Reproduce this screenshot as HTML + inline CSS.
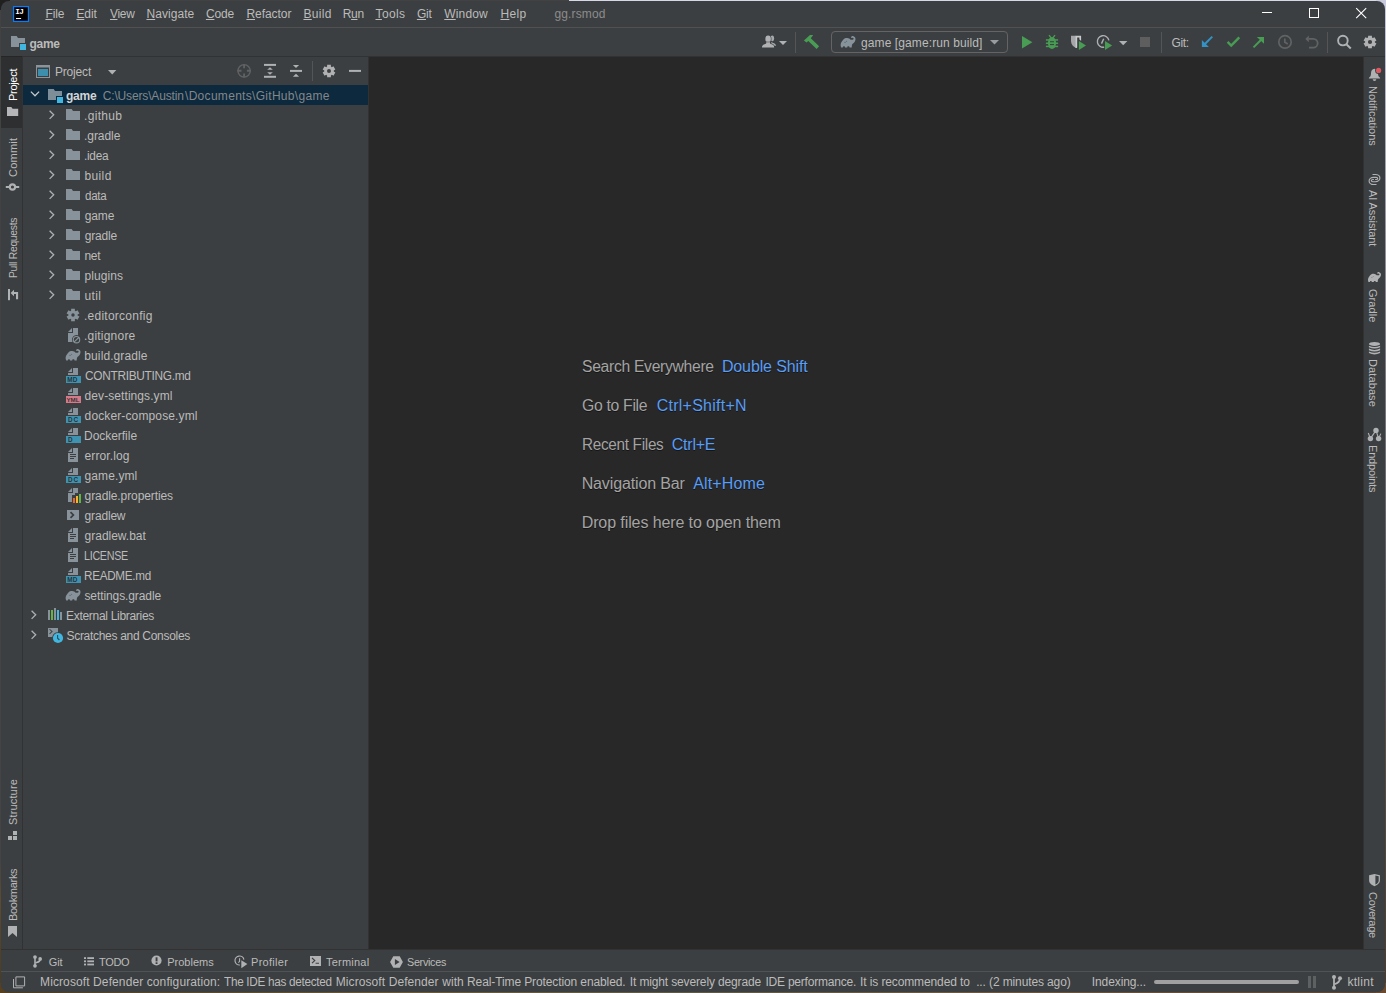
<!DOCTYPE html>
<html lang="en"><head><meta charset="utf-8"><title>game – gg.rsmod</title>
<style>
html,body{margin:0;padding:0}
body{width:1386px;height:993px;overflow:hidden;position:relative;
  background:linear-gradient(to bottom,#424242 0,#444444 860px,#5e4a2c 900px,#4c3a20 993px);
  font-family:"Liberation Sans",sans-serif;font-size:12px;color:#bbbbbb}
#topedge{position:absolute;left:569px;top:0;width:817px;height:1px;background:#d6d8e6}
#rightedge{position:absolute;left:1385px;top:0;width:1px;height:993px;background:linear-gradient(to bottom,#c8cadc 0,#8a8790 30%,#5d5a5e 60%,#4d3b2a 100%)}
#botedge{position:absolute;left:0;top:992px;width:1386px;height:1px;background:linear-gradient(to right,#4a3a20 0,#6a5a3a 30%,#5e5a48 50%,#6c5840 70%,#5a4433 100%)}
#win{position:absolute;left:1px;top:1px;width:1384px;height:991px;background:#3c3f41;border-radius:8px;overflow:hidden}
#win *{box-sizing:border-box}
.abs,.t,.i,.vt{position:absolute}
.t{white-space:nowrap;display:block;transform-origin:0 0}
.i{display:block;overflow:visible}
.hl{position:absolute;height:1px}
.vl{position:absolute;width:1px}
u{text-decoration:underline;text-underline-offset:1px;text-decoration-thickness:1px}
.b{font-weight:bold}
.dim{color:#8c8c8c}
.w{color:#ffffff}
/* vertical labels */
.vt{white-space:nowrap;display:block;height:14px;line-height:14px;font-size:11px;transform-origin:0 0}
.up{transform:rotate(-90deg)}
.dn{transform:rotate(90deg)}
/* editor hints */
.hint{font-size:16px;color:#a4a4a4;text-shadow:0 1px 0 #151515}
.hint .k{color:#589df6}
.s11{font-size:11px}
.cnr{position:absolute;width:10px;height:10px}

</style></head>
<body>
<div id="topedge"></div><div id="rightedge"></div><div id="botedge"></div><div class="cnr" style="left:1376px;top:0;background:#c9cbdd"></div><div class="cnr" style="left:1376px;top:983px;background:#6a4a30"></div><div class="cnr" style="left:0;top:983px;background:#574020"></div><div class="cnr" style="left:0;top:0;background:#202020"></div>
<div id="win">
<div id="o" class="abs" style="left:-1px;top:-1px;width:1386px;height:993px">
<div class="hl" style="left:0;top:27px;width:1386px;background:#515151"></div>
<svg class="i" style="left:13px;top:6px" width="16" height="16" viewBox="0 0 16 16"><rect width="16" height="16" fill="#087cfa"/><rect x="1.2" y="1.2" width="13.6" height="13.6" fill="#000"/><rect x="3" y="12" width="5.100" height="1" fill="#fff"/><text x="2.300" y="8.100" font-family="Liberation Mono, monospace" font-weight="bold" font-size="7.600" letter-spacing="-0.700" fill="#fff">IJ</text></svg>
<span id="m_File" class="t " style="left:45.44px;top:4px;height:20px;line-height:20px;letter-spacing:-0.14px;"><u>F</u>ile</span><span id="m_Edit" class="t " style="left:76.44px;top:4px;height:20px;line-height:20px;letter-spacing:-0.12px;"><u>E</u>dit</span><span id="m_View" class="t " style="left:110.00px;top:4px;height:20px;line-height:20px;letter-spacing:-0.3px;transform:scaleX(0.9933);"><u>V</u>iew</span><span id="m_Navigate" class="t " style="left:146.44px;top:4px;height:20px;line-height:20px;letter-spacing:0.069px;"><u>N</u>avigate</span><span id="m_Code" class="t " style="left:205.92px;top:4px;height:20px;line-height:20px;letter-spacing:-0.16px;"><u>C</u>ode</span><span id="m_Refactor" class="t " style="left:246.44px;top:4px;height:20px;line-height:20px;letter-spacing:-0.06px;"><u>R</u>efactor</span><span id="m_Build" class="t " style="left:303.44px;top:4px;height:20px;line-height:20px;letter-spacing:0.31px;"><u>B</u>uild</span><span id="m_Run" class="t " style="left:342.74px;top:4px;height:20px;line-height:20px;letter-spacing:-0.3px;">R<u>u</u>n</span><span id="m_Tools" class="t " style="left:375.50px;top:4px;height:20px;line-height:20px;letter-spacing:0.375px;"><u>T</u>ools</span><span id="m_Git" class="t " style="left:416.88px;top:4px;height:20px;line-height:20px;letter-spacing:-0.24px;"><u>G</u>it</span><span id="m_Window" class="t " style="left:444.28px;top:4px;height:20px;line-height:20px;letter-spacing:0.144px;"><u>W</u>indow</span><span id="m_Help" class="t " style="left:500.44px;top:4px;height:20px;line-height:20px;letter-spacing:0.32px;"><u>H</u>elp</span><span id="wtitle" class="t dim" style="left:554.50px;top:4px;height:20px;line-height:20px;letter-spacing:0.129px;">gg.rsmod</span>
<svg class="i" style="left:1250px;top:0" width="136" height="27" viewBox="0 0 136 27" shape-rendering="crispEdges"><rect x="12" y="12" width="10" height="1" fill="#fff"/><rect x="59.5" y="8.5" width="9" height="9" rx="1" fill="none" stroke="#fff" stroke-width="1"/></svg><svg class="i" style="left:1350px;top:0" width="30" height="27" viewBox="0 0 30 27"><path d="M6.2,8.2L16.2,18.2M16.2,8.2L6.2,18.2" stroke="#fff" stroke-width="1.1"/></svg>
<div class="hl" style="left:0;top:56px;width:1386px;background:#323232"></div>
<svg class="i" style="left:10px;top:34px" width="16" height="16" viewBox="0 0 16 16"><path fill="#9AA7B0" fill-opacity=".8" d="M1,13H9V9H15V4H7.985L6.696,2H1Z"/><rect x="10" y="10" width="6" height="6" fill="#40B6E0"/></svg><span id="nav_game" class="t b" style="left:29.50px;top:34px;height:20px;line-height:20px;letter-spacing:-0.3px;">game</span><svg class="i" style="left:761px;top:34px" width="16" height="16" viewBox="0 0 16 16"><g fill="#AFB1B3"><g fill-opacity=".92"><ellipse cx="11.300" cy="4.300" rx="1.800" ry="2.900"/><path d="M10.400,8C12,9 14.600,9.400 15.200,11.800L13.400,11.800C12.800,10.400 11.400,10 10,9.400Z"/></g><g stroke="#3c3f41" stroke-width="1.300" paint-order="stroke"><ellipse cx="7.100" cy="4.900" rx="2.750" ry="3.350"/><path d="M1,13.400C1,11 3,10.500 5.200,9.600L5.200,8.300L9,8.300L9,9.600C11.200,10.500 13.200,11 13.200,13.400Z"/></g></g></svg><svg class="i" style="left:779px;top:41px" width="8" height="4" viewBox="0 0 8 4"><path d="M0,0H8L4,4Z" fill="#AFB1B3"/></svg><div class="vl" style="left:795px;top:32px;height:21px;background:#555555"></div>
<svg class="i" style="left:803px;top:34px" width="17" height="16" viewBox="0 0 17 16"><path fill="#499C54" d="M.9,6.500L7,1.050L10.200,1.050L7.800,4.300L16.100,12.200L13.600,15.100L5.300,6.900L3.500,8.400Z"/></svg><div class="abs" style="left:831px;top:31px;width:177px;height:22px;border:1px solid #646464;border-radius:4px"></div>
<svg class="i" style="left:840px;top:34px" width="16" height="16" viewBox="0 0 16 16"><path fill="#9AA7B0" fill-opacity=".8" d="M1.2,13.6C0.5,12 0.4,10 1.2,8.6C1.8,7.4 2.6,6.6 3.4,5.6C4.4,4.4 6,4 7.2,4.1C8.6,4.2 9.8,4.8 10.6,5.8L12.6,5.8C13.4,5.8 13.8,5.2 13.6,4.6C13.4,3.9 12.6,3.6 12,3.9C11.5,4.1 11,3.8 11.1,3.3C11.3,2.4 12.4,1.9 13.4,2.2C14.8,2.6 15.6,3.8 15.5,5.2C15.4,7 14.4,8.4 13,9.6C12.2,10.3 11.8,11 11.8,12L11.7,13.6L9.6,13.6C9.6,12.6 9,12.2 8.3,12.2C7.6,12.2 7.2,12.8 7.2,13.4L5,13.4C5,12.7 4.6,12.2 3.9,12.2C3.2,12.2 2.8,12.8 2.8,13.6Z"/><path d="M4.2,8.3C4.8,8.7 5.6,8.6 6,8.1" fill="none" stroke="#3c3f41" stroke-opacity=".55" stroke-width=".7"/><circle cx="6.6" cy="7.3" r=".55" fill="#3c3f41" fill-opacity=".6"/></svg><span id="runcfg" class="t " style="left:861.00px;top:33px;height:20px;line-height:20px;letter-spacing:0.1px;">game [game:run build]</span><svg class="i" style="left:990px;top:40.3px" width="9" height="5" viewBox="0 0 9 5"><path d="M0,0H9L4.5,4.600Z" fill="#9a9da0"/></svg><svg class="i" style="left:1021.6px;top:35.8px" width="11" height="13" viewBox="0 0 11 13"><path d="M0,0L10.400,6.200L0,12.400Z" fill="#499C54"/></svg><svg class="i" style="left:1044px;top:34px" width="16" height="16" viewBox="0 0 16 16"><g fill="#499C54"><ellipse cx="8" cy="9" rx="4.100" ry="5.900"/><rect x="1.900" y="5.200" width="12.200" height="1.500"/><rect x="1.900" y="8.500" width="12.200" height="1.500"/><rect x="1.900" y="11.700" width="12.200" height="1.500"/></g><path d="M5,1.200L7.200,4M11,1.200L8.800,4" stroke="#499C54" stroke-width="1.300" fill="none"/><rect x="6" y="7.250" width="4" height="1" fill="#3c3f41"/><rect x="6" y="10.100" width="4" height="1" fill="#3c3f41"/></svg><svg class="i" style="left:1070px;top:34px" width="17" height="17" viewBox="0 0 17 17"><path d="M1,1.800H6V14.100C3,12.600 1,10.400 1,7Z" fill="#A4A6A8"/><path d="M5.600,1.800H11.100V7H9.400V3.600H7.200V13.400C6.900,13.700 6.400,13.900 6,14.100C5.800,14 5.700,13.950 5.600,13.900Z" fill="#C8CACC"/><path d="M8.900,5.300L17.600,11.500L8.900,17.600Z" fill="#3c3f41"/><path d="M0,0L7.100,4.500L0,9Z" transform="translate(8.900 7)" fill="#499C54"/></svg><svg class="i" style="left:1096px;top:34px" width="17" height="17" viewBox="0 0 17 17"><path d="M12.900,6.400A5.800,5.800 0 1 0 8.200,13.200" fill="none" stroke="#AFB1B3" stroke-width="1.350"/><path d="M7.700,4.800L5.500,9.600" fill="none" stroke="#AFB1B3" stroke-width="1.400"/><path d="M9,5.300L17.600,11.500L9,17.600Z" fill="#3c3f41"/><path d="M0,0L7.100,4.500L0,9Z" transform="translate(9 7)" fill="#499C54"/></svg><svg class="i" style="left:1118.7px;top:41px" width="9" height="5" viewBox="0 0 9 5"><path d="M0,0H8.400L4.200,4.300Z" fill="#AFB1B3"/></svg><div class="abs" style="left:1140px;top:37px;width:10px;height:10px;background:#5e5e5e"></div>
<div class="vl" style="left:1161px;top:32px;height:21px;background:#555555"></div>
<span id="gitlbl" class="t " style="left:1171.38px;top:33px;height:20px;line-height:20px;letter-spacing:-0.293px;">Git:</span><svg class="i" style="left:1196px;top:30px" width="76" height="24" viewBox="1196 30 76 24"><path d="M1201.900,40.100V47H1208.900Z" fill="#3592C4"/><path d="M1204.600,44.300L1212.300,36.600" stroke="#3592C4" stroke-width="2" fill="none"/><path d="M1227.600,41.900L1231.200,45.500L1239.300,37.400" stroke="#499C54" stroke-width="2.400" fill="none"/><path d="M1256.900,37.100H1264V43.700Z" fill="#499C54"/><path d="M1253.500,47.400L1261.200,39.800" stroke="#499C54" stroke-width="2" fill="none"/></svg><svg class="i" style="left:1270px;top:30px" width="56" height="24" viewBox="1270 30 56 24"><circle cx="1285" cy="41.900" r="6.200" fill="none" stroke="#606263" stroke-width="1.700"/><path d="M1284.800,38.500V42.300L1287.800,44.100" fill="none" stroke="#606263" stroke-width="1.700"/><path d="M1305.300,38.900L1308.800,35.500V42.300Z" fill="#606263"/><path d="M1308.600,38.800H1313.200A4.450,4.450 0 0 1 1313.200,47.700H1309" fill="none" stroke="#606263" stroke-width="1.800"/></svg><div class="vl" style="left:1327px;top:32px;height:21px;background:#555555"></div>
<svg class="i" style="left:1332px;top:30px" width="52" height="24" viewBox="1332 30 52 24"><circle cx="1342.900" cy="40.600" r="4.800" fill="none" stroke="#AFB1B3" stroke-width="1.900"/><path d="M1346.400,44.300L1350.800,48.500" stroke="#AFB1B3" stroke-width="2" fill="none"/></svg><svg class="i" style="left:1362px;top:34px" width="16" height="16" viewBox="0 0 16 16"><path fill="#AFB1B3" fill-rule="evenodd" stroke-linejoin="round" d="M6.05,3.51L6.11,1.68L9.89,1.68L9.95,3.51L10.92,4.06L12.53,3.20L14.42,6.47L12.87,7.44L12.87,8.56L14.42,9.53L12.53,12.80L10.92,11.94L9.95,12.49L9.89,14.32L6.11,14.32L6.05,12.49L5.08,11.94L3.47,12.80L1.58,9.53L3.13,8.56L3.13,7.44L1.58,6.47L3.47,3.20L5.08,4.06ZM10.10,8A2.1,2.1 0 1 0 5.90,8A2.1,2.1 0 1 0 10.10,8Z"/></svg>
<div class="vl" style="left:22px;top:57px;height:892px;background:#323232"></div>
<div class="abs" style="left:1px;top:57px;width:21px;height:71px;background:#2d2f30"></div><div class="hl" style="left:1px;top:56px;width:21px;background:#262626"></div>
<span id="v_project" class="vt up w" style="left:6.4px;top:100.74px;letter-spacing:-0.3px;transform:rotate(-90deg)">Project</span><span id="v_commit" class="vt up " style="left:6.4px;top:176.58px;letter-spacing:0.224px;transform:rotate(-90deg)">Commit</span><span id="v_pull" class="vt up " style="left:6.4px;top:277.90px;letter-spacing:-0.3px;transform:rotate(-90deg) scaleX(0.941)">Pull Requests</span><span id="v_structure" class="vt up " style="left:6.4px;top:824.74px;letter-spacing:0.147px;transform:rotate(-90deg)">Structure</span><span id="v_bookmarks" class="vt up " style="left:6.4px;top:920.94px;letter-spacing:-0.3px;transform:rotate(-90deg)">Bookmarks</span><svg class="i" style="left:0;top:100px" width="23" height="850" viewBox="0 100 23 850"><g fill="#AFB1B3"><path d="M7,107H11.300L12.600,108.800H18.200V116H7Z" fill="#B4B6B8"/><rect x="5.800" y="186" width="3.300" height="2"/><rect x="15.900" y="186" width="3.300" height="2"/><circle cx="12.450" cy="187" r="2.650" fill="none" stroke="#AFB1B3" stroke-width="2.100"/><rect x="8" y="289" width="2" height="11.200"/><path d="M10.600,293L14,289.700V292.100H18.100V299.200H16V294.100H14V296.300Z"/><rect x="13" y="831" width="4" height="4"/><rect x="8" y="836" width="4" height="4"/><rect x="13" y="836" width="4" height="4"/><path d="M8,926H17V937L12.500,933L8,937Z"/></g></svg>
<div class="abs" style="left:23px;top:85px;width:345px;height:20px;background:#0d293e"></div>
<div class="vl" style="left:368px;top:57px;height:892px;background:#323232"></div>
<svg class="i" style="left:36px;top:65px" width="14" height="13" viewBox="0 0 14 13"><rect x=".5" y=".5" width="13" height="12" fill="none" stroke="#8a949b" stroke-width="1"/><rect x=".5" y=".5" width="13" height="2" fill="#8a949b"/><rect x="2" y="4" width="10" height="7" fill="#3D8FAE"/></svg><span id="ph_project" class="t " style="left:54.94px;top:62px;height:20px;line-height:20px;letter-spacing:-0.173px;">Project</span><svg class="i" style="left:107.8px;top:69.9px" width="9" height="5" viewBox="0 0 9 5"><path d="M0,0H8.400L4.200,4.400Z" fill="#AFB1B3"/></svg><svg class="i" style="left:230px;top:58px" width="136" height="26" viewBox="230 58 136 26"><circle cx="244.100" cy="70.800" r="6.200" fill="none" stroke="#5f6162" stroke-width="1.400"/><path d="M244.100,64V68.200M244.100,73.600V77.600M237.300,70.800H241.500M246.900,70.800H250.900" stroke="#5f6162" stroke-width="1.900" fill="none"/><g fill="#AFB1B3"><rect x="264" y="63.900" width="12" height="2"/><rect x="264" y="75.800" width="12" height="2"/><path d="M270,67.200L272.800,69.700H267.200Z"/><path d="M270,74.700L272.800,72.200H267.200Z"/><rect x="290" y="69.900" width="12" height="2"/><path d="M296,67.900L299.100,65H292.900Z"/><path d="M296,73.800L299.100,76.800H292.900Z"/><rect x="349" y="69.900" width="12" height="2"/></g></svg>
<div class="vl" style="left:312px;top:61px;height:20px;background:#555555"></div>
<svg class="i" style="left:321px;top:63px" width="16" height="16" viewBox="0 0 16 16"><path fill="#AFB1B3" fill-rule="evenodd" stroke-linejoin="round" d="M6.09,3.60L6.14,1.77L9.86,1.77L9.91,3.60L10.86,4.14L12.46,3.28L14.32,6.50L12.77,7.46L12.77,8.54L14.32,9.50L12.46,12.72L10.86,11.86L9.91,12.40L9.86,14.23L6.14,14.23L6.09,12.40L5.14,11.86L3.54,12.72L1.68,9.50L3.23,8.54L3.23,7.46L1.68,6.50L3.54,3.28L5.14,4.14ZM10.00,8A2,2 0 1 0 6.00,8A2,2 0 1 0 10.00,8Z"/></svg><svg class="i" style="left:26.5px;top:87px" width="16" height="16" viewBox="0 0 16 16"><path d="M3.9,4.6 L8,8.8 L12.1,4.6" fill="none" stroke="#c4c8cb" stroke-width="1.3"/></svg><svg class="i" style="left:47px;top:87px" width="16" height="16" viewBox="0 0 16 16"><path fill="#9AA7B0" fill-opacity=".8" d="M1,13H9V9H15V4H7.985L6.696,2H1Z"/><rect x="10" y="10" width="6" height="6" fill="#40B6E0"/></svg><span id="t_root" class="t b" style="left:66.00px;top:86px;height:20px;line-height:20px;letter-spacing:-0.233px;color:#d4d4d4;">game</span><span id="t_rootpath" class="t " style="left:102.72px;top:86px;height:20px;line-height:20px;letter-spacing:-0.151px;color:#848789;">C:\Users\Austin</span><span id="t_rootpath2" class="t " style="left:185.02px;top:86px;height:20px;line-height:20px;letter-spacing:0.299px;color:#848789;">\Documents\GitHub\game</span><svg class="i" style="left:44.3px;top:107px" width="16" height="16" viewBox="0 0 16 16"><path d="M5.6,3.7 L9.7,7.8 L5.6,11.9" fill="none" stroke="#adb0b2" stroke-width="1.3"/></svg><svg class="i" style="left:65px;top:107px" width="16" height="16" viewBox="0 0 16 16"><path fill="#9AA7B0" fill-opacity=".8" d="M1,13H15V4H7.985L6.696,2H1Z"/></svg><span id="t_d0" class="t " style="left:84.06px;top:106px;height:20px;line-height:20px;letter-spacing:0.303px;">.github</span>
<svg class="i" style="left:44.3px;top:127px" width="16" height="16" viewBox="0 0 16 16"><path d="M5.6,3.7 L9.7,7.8 L5.6,11.9" fill="none" stroke="#adb0b2" stroke-width="1.3"/></svg><svg class="i" style="left:65px;top:127px" width="16" height="16" viewBox="0 0 16 16"><path fill="#9AA7B0" fill-opacity=".8" d="M1,13H15V4H7.985L6.696,2H1Z"/></svg><span id="t_d1" class="t " style="left:84.06px;top:126px;height:20px;line-height:20px;letter-spacing:-0.07px;">.gradle</span>
<svg class="i" style="left:44.3px;top:147px" width="16" height="16" viewBox="0 0 16 16"><path d="M5.6,3.7 L9.7,7.8 L5.6,11.9" fill="none" stroke="#adb0b2" stroke-width="1.3"/></svg><svg class="i" style="left:65px;top:147px" width="16" height="16" viewBox="0 0 16 16"><path fill="#9AA7B0" fill-opacity=".8" d="M1,13H15V4H7.985L6.696,2H1Z"/></svg><span id="t_d2" class="t " style="left:84.06px;top:146px;height:20px;line-height:20px;letter-spacing:-0.3px;transform:scaleX(0.9877);">.idea</span>
<svg class="i" style="left:44.3px;top:167px" width="16" height="16" viewBox="0 0 16 16"><path d="M5.6,3.7 L9.7,7.8 L5.6,11.9" fill="none" stroke="#adb0b2" stroke-width="1.3"/></svg><svg class="i" style="left:65px;top:167px" width="16" height="16" viewBox="0 0 16 16"><path fill="#9AA7B0" fill-opacity=".8" d="M1,13H15V4H7.985L6.696,2H1Z"/></svg><span id="t_d3" class="t " style="left:84.42px;top:166px;height:20px;line-height:20px;letter-spacing:0.395px;">build</span>
<svg class="i" style="left:44.3px;top:187px" width="16" height="16" viewBox="0 0 16 16"><path d="M5.6,3.7 L9.7,7.8 L5.6,11.9" fill="none" stroke="#adb0b2" stroke-width="1.3"/></svg><svg class="i" style="left:65px;top:187px" width="16" height="16" viewBox="0 0 16 16"><path fill="#9AA7B0" fill-opacity=".8" d="M1,13H15V4H7.985L6.696,2H1Z"/></svg><span id="t_d4" class="t " style="left:84.70px;top:186px;height:20px;line-height:20px;letter-spacing:-0.3px;transform:scaleX(0.9641);">data</span>
<svg class="i" style="left:44.3px;top:207px" width="16" height="16" viewBox="0 0 16 16"><path d="M5.6,3.7 L9.7,7.8 L5.6,11.9" fill="none" stroke="#adb0b2" stroke-width="1.3"/></svg><svg class="i" style="left:65px;top:207px" width="16" height="16" viewBox="0 0 16 16"><path fill="#9AA7B0" fill-opacity=".8" d="M1,13H15V4H7.985L6.696,2H1Z"/></svg><span id="t_d5" class="t " style="left:84.70px;top:206px;height:20px;line-height:20px;letter-spacing:-0.127px;">game</span>
<svg class="i" style="left:44.3px;top:227px" width="16" height="16" viewBox="0 0 16 16"><path d="M5.6,3.7 L9.7,7.8 L5.6,11.9" fill="none" stroke="#adb0b2" stroke-width="1.3"/></svg><svg class="i" style="left:65px;top:227px" width="16" height="16" viewBox="0 0 16 16"><path fill="#9AA7B0" fill-opacity=".8" d="M1,13H15V4H7.985L6.696,2H1Z"/></svg><span id="t_d6" class="t " style="left:84.70px;top:226px;height:20px;line-height:20px;letter-spacing:-0.156px;">gradle</span>
<svg class="i" style="left:44.3px;top:247px" width="16" height="16" viewBox="0 0 16 16"><path d="M5.6,3.7 L9.7,7.8 L5.6,11.9" fill="none" stroke="#adb0b2" stroke-width="1.3"/></svg><svg class="i" style="left:65px;top:247px" width="16" height="16" viewBox="0 0 16 16"><path fill="#9AA7B0" fill-opacity=".8" d="M1,13H15V4H7.985L6.696,2H1Z"/></svg><span id="t_d7" class="t " style="left:84.38px;top:246px;height:20px;line-height:20px;letter-spacing:-0.2px;">net</span>
<svg class="i" style="left:44.3px;top:267px" width="16" height="16" viewBox="0 0 16 16"><path d="M5.6,3.7 L9.7,7.8 L5.6,11.9" fill="none" stroke="#adb0b2" stroke-width="1.3"/></svg><svg class="i" style="left:65px;top:267px" width="16" height="16" viewBox="0 0 16 16"><path fill="#9AA7B0" fill-opacity=".8" d="M1,13H15V4H7.985L6.696,2H1Z"/></svg><span id="t_d8" class="t " style="left:84.42px;top:266px;height:20px;line-height:20px;letter-spacing:0.097px;">plugins</span>
<svg class="i" style="left:44.3px;top:287px" width="16" height="16" viewBox="0 0 16 16"><path d="M5.6,3.7 L9.7,7.8 L5.6,11.9" fill="none" stroke="#adb0b2" stroke-width="1.3"/></svg><svg class="i" style="left:65px;top:287px" width="16" height="16" viewBox="0 0 16 16"><path fill="#9AA7B0" fill-opacity=".8" d="M1,13H15V4H7.985L6.696,2H1Z"/></svg><span id="t_d9" class="t " style="left:84.42px;top:286px;height:20px;line-height:20px;letter-spacing:0.393px;">util</span>
<svg class="i" style="left:65px;top:307px" width="16" height="16" viewBox="0 0 16 16"><path fill="#9AA7B0" fill-opacity=".8" fill-rule="evenodd" stroke-linejoin="round" d="M6.17,3.78L6.11,1.68L9.89,1.68L9.83,3.78L10.74,4.30L12.53,3.20L14.42,6.47L12.57,7.48L12.57,8.52L14.42,9.53L12.53,12.80L10.74,11.70L9.83,12.22L9.89,14.32L6.11,14.32L6.17,12.22L5.26,11.70L3.47,12.80L1.58,9.53L3.43,8.52L3.43,7.48L1.58,6.47L3.47,3.20L5.26,4.30ZM9.70,8A1.7,1.7 0 1 0 6.30,8A1.7,1.7 0 1 0 9.70,8Z"/></svg><span id="t_f0" class="t " style="left:83.96px;top:306px;height:20px;line-height:20px;letter-spacing:0.253px;">.editorconfig</span>
<svg class="i" style="left:65px;top:327px" width="16" height="16" viewBox="0 0 16 16"><path fill="#9AA7B0" fill-opacity=".8" d="M7,1L3,5H7Z"/><path fill="#9AA7B0" fill-opacity=".8" d="M8,1V6H3V15H7.4A4.7,4.7 0 0 1 13,8.3V1Z"/><circle cx="11.5" cy="12.7" r="3.2" fill="none" stroke="#9AA7B0" stroke-opacity=".8" stroke-width="1.1"/><path d="M9.3,14.9L13.7,10.5" stroke="#9AA7B0" stroke-opacity=".8" stroke-width="1.1"/></svg><span id="t_f1" class="t " style="left:83.96px;top:326px;height:20px;line-height:20px;letter-spacing:0.218px;">.gitignore</span>
<svg class="i" style="left:65px;top:347px" width="16" height="16" viewBox="0 0 16 16"><path fill="#9AA7B0" fill-opacity=".8" d="M1.2,13.6C0.5,12 0.4,10 1.2,8.6C1.8,7.4 2.6,6.6 3.4,5.6C4.4,4.4 6,4 7.2,4.1C8.6,4.2 9.8,4.8 10.6,5.8L12.6,5.8C13.4,5.8 13.8,5.2 13.6,4.6C13.4,3.9 12.6,3.6 12,3.9C11.5,4.1 11,3.8 11.1,3.3C11.3,2.4 12.4,1.9 13.4,2.2C14.8,2.6 15.6,3.8 15.5,5.2C15.4,7 14.4,8.4 13,9.6C12.2,10.3 11.8,11 11.8,12L11.7,13.6L9.6,13.6C9.6,12.6 9,12.2 8.3,12.2C7.6,12.2 7.2,12.8 7.2,13.4L5,13.4C5,12.7 4.6,12.2 3.9,12.2C3.2,12.2 2.8,12.8 2.8,13.6Z"/><path d="M4.2,8.3C4.8,8.7 5.6,8.6 6,8.1" fill="none" stroke="#3c3f41" stroke-opacity=".55" stroke-width=".7"/><circle cx="6.6" cy="7.3" r=".55" fill="#3c3f41" fill-opacity=".6"/></svg><span id="t_f2" class="t " style="left:84.32px;top:346px;height:20px;line-height:20px;letter-spacing:0.1px;">build.gradle</span>
<svg class="i" style="left:65px;top:367px" width="16" height="16" viewBox="0 0 16 16"><path fill="#9AA7B0" fill-opacity=".8" d="M7,1L3,5H7Z"/><path fill="#9AA7B0" fill-opacity=".8" d="M8,1V6H3V8H13V1Z"/><rect x="1" y="9" width="15" height="7" fill="#40B6E0" fill-opacity="0.7"/><text x="2.2" y="15" font-family="Liberation Sans, sans-serif" font-weight="bold" font-size="6.4" letter-spacing="0.3" fill="#231F20" fill-opacity=".85">MD</text></svg><span id="t_f3" class="t " style="left:84.52px;top:366px;height:20px;line-height:20px;letter-spacing:-0.3px;transform:scaleX(0.9876);">CONTRIBUTING.md</span>
<svg class="i" style="left:65px;top:387px" width="16" height="16" viewBox="0 0 16 16"><path fill="#9AA7B0" fill-opacity=".8" d="M7,1L3,5H7Z"/><path fill="#9AA7B0" fill-opacity=".8" d="M8,1V6H3V8H13V1Z"/><rect x="1" y="9" width="15" height="7" fill="#F98B9E" fill-opacity="0.8"/><text x="1.4" y="15" font-family="Liberation Sans, sans-serif" font-weight="bold" font-size="6.2" letter-spacing="0" fill="#231F20" fill-opacity=".85">YML</text></svg><span id="t_f4" class="t " style="left:84.60px;top:386px;height:20px;line-height:20px;letter-spacing:0.075px;">dev-settings.yml</span>
<svg class="i" style="left:65px;top:407px" width="16" height="16" viewBox="0 0 16 16"><path fill="#9AA7B0" fill-opacity=".8" d="M7,1L3,5H7Z"/><path fill="#9AA7B0" fill-opacity=".8" d="M8,1V6H3V8H13V1Z"/><rect x="1" y="9" width="15" height="7" fill="#40B6E0" fill-opacity="0.7"/><text x="3" y="15" font-family="Liberation Sans, sans-serif" font-weight="bold" font-size="6.4" letter-spacing="1.0" fill="#231F20" fill-opacity=".85">DC</text></svg><span id="t_f5" class="t " style="left:84.60px;top:406px;height:20px;line-height:20px;letter-spacing:0.125px;">docker-compose.yml</span>
<svg class="i" style="left:65px;top:427px" width="16" height="16" viewBox="0 0 16 16"><path fill="#9AA7B0" fill-opacity=".8" d="M7,1L3,5H7Z"/><path fill="#9AA7B0" fill-opacity=".8" d="M8,1V6H3V8H13V1Z"/><rect x="1" y="9" width="15" height="7" fill="#40B6E0" fill-opacity="0.7"/><text x="3" y="15" font-family="Liberation Sans, sans-serif" font-weight="bold" font-size="6.4" letter-spacing="0" fill="#231F20" fill-opacity=".85">D</text></svg><span id="t_f6" class="t " style="left:84.04px;top:426px;height:20px;line-height:20px;letter-spacing:-0.036px;">Dockerfile</span>
<svg class="i" style="left:65px;top:447px" width="16" height="16" viewBox="0 0 16 16"><path fill="#9AA7B0" fill-opacity=".8" d="M7,1L3,5H7Z"/><path fill="#9AA7B0" fill-opacity=".8" fill-rule="evenodd" d="M8,1V6H3V15H13V1ZM5,7H11V8H5ZM5,9H11V10H5ZM5,11H9V12H5Z"/></svg><span id="t_f7" class="t " style="left:84.60px;top:446px;height:20px;line-height:20px;letter-spacing:0.1px;">error.log</span>
<svg class="i" style="left:65px;top:467px" width="16" height="16" viewBox="0 0 16 16"><path fill="#9AA7B0" fill-opacity=".8" d="M7,1L3,5H7Z"/><path fill="#9AA7B0" fill-opacity=".8" d="M8,1V6H3V8H13V1Z"/><rect x="1" y="9" width="15" height="7" fill="#40B6E0" fill-opacity="0.7"/><text x="3" y="15" font-family="Liberation Sans, sans-serif" font-weight="bold" font-size="6.4" letter-spacing="1.0" fill="#231F20" fill-opacity=".85">DC</text></svg><span id="t_f8" class="t " style="left:84.60px;top:466px;height:20px;line-height:20px;letter-spacing:0.091px;">game.yml</span>
<svg class="i" style="left:65px;top:487px" width="16" height="16" viewBox="0 0 16 16"><path fill="#9AA7B0" fill-opacity=".8" d="M7,1L3,5H7Z"/><path fill="#9AA7B0" fill-opacity=".8" d="M8,1V6H3V15H7V8H10V6H13V1Z"/><rect x="8" y="11" width="2" height="5" fill="#F26522"/><rect x="11" y="9" width="2" height="7" fill="#F9B233"/><rect x="14" y="7" width="2" height="9" fill="#62B543"/></svg><span id="t_f9" class="t " style="left:84.60px;top:486px;height:20px;line-height:20px;letter-spacing:-0.1px;">gradle.properties</span>
<svg class="i" style="left:65px;top:507px" width="16" height="16" viewBox="0 0 16 16"><path fill="#9AA7B0" fill-opacity=".8" fill-rule="evenodd" d="M2,3H14V13H2ZM4.900,5.800L7.200,8L4.900,10.200L6.100,11.400L9.600,8L6.100,4.600Z"/></svg><span id="t_f10" class="t " style="left:84.60px;top:506px;height:20px;line-height:20px;letter-spacing:-0.18px;">gradlew</span>
<svg class="i" style="left:65px;top:527px" width="16" height="16" viewBox="0 0 16 16"><path fill="#9AA7B0" fill-opacity=".8" d="M7,1L3,5H7Z"/><path fill="#9AA7B0" fill-opacity=".8" fill-rule="evenodd" d="M8,1V6H3V15H13V1ZM5,7H11V8H5ZM5,9H11V10H5ZM5,11H9V12H5Z"/></svg><span id="t_f11" class="t " style="left:84.60px;top:526px;height:20px;line-height:20px;letter-spacing:-0.02px;">gradlew.bat</span>
<svg class="i" style="left:65px;top:547px" width="16" height="16" viewBox="0 0 16 16"><path fill="#9AA7B0" fill-opacity=".8" d="M7,1L3,5H7Z"/><path fill="#9AA7B0" fill-opacity=".8" fill-rule="evenodd" d="M8,1V6H3V15H13V1ZM5,7H11V8H5ZM5,9H11V10H5ZM5,11H9V12H5Z"/></svg><span id="t_f12" class="t " style="left:84.20px;top:546px;height:20px;line-height:20px;letter-spacing:-0.3px;transform:scaleX(0.8923);">LICENSE</span>
<svg class="i" style="left:65px;top:567px" width="16" height="16" viewBox="0 0 16 16"><path fill="#9AA7B0" fill-opacity=".8" d="M7,1L3,5H7Z"/><path fill="#9AA7B0" fill-opacity=".8" d="M8,1V6H3V8H13V1Z"/><rect x="1" y="9" width="15" height="7" fill="#40B6E0" fill-opacity="0.7"/><text x="2.2" y="15" font-family="Liberation Sans, sans-serif" font-weight="bold" font-size="6.4" letter-spacing="0.3" fill="#231F20" fill-opacity=".85">MD</text></svg><span id="t_f13" class="t " style="left:84.08px;top:566px;height:20px;line-height:20px;letter-spacing:-0.3px;transform:scaleX(0.9759);">README.md</span>
<svg class="i" style="left:65px;top:587px" width="16" height="16" viewBox="0 0 16 16"><path fill="#9AA7B0" fill-opacity=".8" d="M1.2,13.6C0.5,12 0.4,10 1.2,8.6C1.8,7.4 2.6,6.6 3.4,5.6C4.4,4.4 6,4 7.2,4.1C8.6,4.2 9.8,4.8 10.6,5.8L12.6,5.8C13.4,5.8 13.8,5.2 13.6,4.6C13.4,3.9 12.6,3.6 12,3.9C11.5,4.1 11,3.8 11.1,3.3C11.3,2.4 12.4,1.9 13.4,2.2C14.8,2.6 15.6,3.8 15.5,5.2C15.4,7 14.4,8.4 13,9.6C12.2,10.3 11.8,11 11.8,12L11.7,13.6L9.6,13.6C9.6,12.6 9,12.2 8.3,12.2C7.6,12.2 7.2,12.8 7.2,13.4L5,13.4C5,12.7 4.6,12.2 3.9,12.2C3.2,12.2 2.8,12.8 2.8,13.6Z"/><path d="M4.2,8.3C4.8,8.7 5.6,8.6 6,8.1" fill="none" stroke="#3c3f41" stroke-opacity=".55" stroke-width=".7"/><circle cx="6.6" cy="7.3" r=".55" fill="#3c3f41" fill-opacity=".6"/></svg><span id="t_f14" class="t " style="left:84.48px;top:586px;height:20px;line-height:20px;letter-spacing:-0.097px;">settings.gradle</span>
<svg class="i" style="left:26.4px;top:607px" width="16" height="16" viewBox="0 0 16 16"><path d="M5.6,3.7 L9.7,7.8 L5.6,11.9" fill="none" stroke="#adb0b2" stroke-width="1.3"/></svg><svg class="i" style="left:47px;top:607px" width="16" height="16" viewBox="0 0 16 16"><rect x="1" y="3" width="2" height="10" fill="#9AA7B0" fill-opacity=".8"/><rect x="4" y="3" width="2" height="10" fill="#62B543"/><rect x="7" y="1" width="2" height="12" fill="#9AA7B0" fill-opacity=".8"/><rect x="10" y="3" width="2" height="10" fill="#40B6E0"/><rect x="13" y="5" width="2" height="8" fill="#9AA7B0" fill-opacity=".8"/></svg><span id="t_ext" class="t " style="left:66.04px;top:606px;height:20px;line-height:20px;letter-spacing:-0.3px;">External Libraries</span><svg class="i" style="left:26.4px;top:627px" width="16" height="16" viewBox="0 0 16 16"><path d="M5.6,3.7 L9.7,7.8 L5.6,11.9" fill="none" stroke="#adb0b2" stroke-width="1.3"/></svg><svg class="i" style="left:47px;top:627px" width="16" height="16" viewBox="0 0 16 16"><path fill="#9AA7B0" fill-opacity=".8" fill-rule="evenodd" d="M1,1H11V5.2A6.2,6.2 0 0 0 5.2,10H1ZM2.2,2.6L4.4,4.6L2.2,6.6L2.9,7.3L5.8,4.6L2.9,1.9Z"/><circle cx="11" cy="11" r="5.1" fill="#40B6E0"/><path d="M10.6,8V11.2L12.4,13" fill="none" stroke="#231F20" stroke-opacity=".7" stroke-width="1.1"/></svg><span id="t_scr" class="t " style="left:66.50px;top:626px;height:20px;line-height:20px;letter-spacing:-0.3px;">Scratches and Consoles</span>
<div class="abs" style="left:369px;top:57px;width:994px;height:892px;background:#282828"></div>
<span id="h0a" class="t hint" style="left:582.12px;top:357px;height:20px;line-height:20px;letter-spacing:-0.3px;transform:scaleX(0.9793);">Search Everywhere</span><span id="h0b" class="t hint k" style="left:721.90px;top:357px;height:20px;line-height:20px;letter-spacing:-0.122px;color:#589df6;">Double Shift</span>
<span id="h1a" class="t hint" style="left:582.28px;top:396px;height:20px;line-height:20px;letter-spacing:-0.3px;transform:scaleX(0.9836);">Go to File</span><span id="h1b" class="t hint k" style="left:656.68px;top:396px;height:20px;line-height:20px;letter-spacing:0.256px;color:#589df6;">Ctrl+Shift+N</span>
<span id="h2a" class="t hint" style="left:581.70px;top:435px;height:20px;line-height:20px;letter-spacing:-0.3px;transform:scaleX(0.9544);">Recent Files</span><span id="h2b" class="t hint k" style="left:671.78px;top:435px;height:20px;line-height:20px;letter-spacing:-0.228px;color:#589df6;">Ctrl+E</span>
<span id="h3a" class="t hint" style="left:581.70px;top:474px;height:20px;line-height:20px;letter-spacing:-0.138px;">Navigation Bar</span><span id="h3b" class="t hint k" style="left:693.34px;top:474px;height:20px;line-height:20px;letter-spacing:0.114px;color:#589df6;">Alt+Home</span>
<span id="h4a" class="t hint" style="left:581.70px;top:513px;height:20px;line-height:20px;letter-spacing:-0.098px;">Drop files here to open them</span>
<div class="vl" style="left:1363px;top:57px;height:892px;background:#323232"></div>
<span id="r_notif" class="vt dn " style="left:1379.5px;top:85.76px;letter-spacing:-0.01px;transform:rotate(90deg)">Notifications</span><span id="r_ai" class="vt dn " style="left:1379.5px;top:190.24px;letter-spacing:-0.095px;transform:rotate(90deg)">AI Assistant</span><span id="r_gradle" class="vt dn " style="left:1379.5px;top:288.66px;letter-spacing:0.048px;transform:rotate(90deg)">Gradle</span><span id="r_db" class="vt dn " style="left:1379.5px;top:358.66px;letter-spacing:0.106px;transform:rotate(90deg)">Database</span><span id="r_endp" class="vt dn " style="left:1379.5px;top:445.46px;letter-spacing:-0.177px;transform:rotate(90deg)">Endpoints</span><span id="r_cov" class="vt dn " style="left:1379.5px;top:891.72px;letter-spacing:-0.211px;transform:rotate(90deg)">Coverage</span><svg class="i" style="left:1364px;top:60px" width="21" height="840" viewBox="1364 60 21 840"><g fill="#AFB1B3"><path d="M1374.500,68.800C1372,68.800 1371,71 1371,73.500C1371,75.800 1370.200,77 1368.900,77.700V78.500H1380.100V77.700C1378.800,77 1378,75.800 1378,73.500C1378,71 1377,68.800 1374.500,68.800Z"/><path d="M1372.700,79.300H1376.300A1.800,1.800 0 0 1 1372.700,79.300Z"/><circle cx="1378.600" cy="70.400" r="3.500" fill="#3c3f41"/><circle cx="1378.600" cy="70.400" r="2.600" fill="#DB5860"/><g transform="translate(1374.500 179.500)" fill="none" stroke="#AFB1B3" stroke-width="1.150"><path d="M.6,0H1.6A1.600,1.100 0 0 0 1.600,-2.200H-1A4.400,3.600 0 0 0 -1,5H2"/><path d="M.6,0H1.6A1.600,1.100 0 0 0 1.600,-2.200H-1A4.400,3.600 0 0 0 -1,5H2" transform="rotate(180)"/></g><path transform="translate(1367.450 270.200) scale(.875)" d="M1.2,13.6C0.5,12 0.4,10 1.2,8.6C1.8,7.4 2.6,6.6 3.4,5.6C4.4,4.4 6,4 7.2,4.1C8.6,4.2 9.8,4.8 10.6,5.8L12.6,5.8C13.4,5.8 13.8,5.2 13.6,4.6C13.4,3.9 12.6,3.6 12,3.9C11.5,4.1 11,3.8 11.1,3.3C11.3,2.4 12.4,1.9 13.4,2.2C14.8,2.6 15.6,3.8 15.5,5.2C15.4,7 14.4,8.4 13,9.6C12.2,10.3 11.8,11 11.8,12L11.7,13.6L9.6,13.6C9.6,12.6 9,12.2 8.3,12.2C7.6,12.2 7.2,12.8 7.2,13.4L5,13.4C5,12.7 4.6,12.2 3.9,12.2C3.2,12.2 2.8,12.8 2.8,13.6Z"/><path d="M1371.100,277.400C1371.600,277.800 1372.300,277.700 1372.700,277.200" fill="none" stroke="#3c3f41" stroke-opacity=".5" stroke-width=".6"/><circle cx="1373.300" cy="276.500" r=".45" fill="#3c3f41" fill-opacity=".5"/><ellipse cx="1374.500" cy="343.900" rx="5.600" ry="2"/><path d="M1368.900,345.7Q1374.500,348.3 1380.100,345.7V347.3Q1374.500,349.9 1368.900,347.3Z"/><path d="M1368.900,348.6Q1374.500,351.2 1380.100,348.6V350.2Q1374.500,352.8 1368.900,350.2Z"/><path d="M1368.900,351.5Q1374.500,354.1 1380.100,351.5V353.1Q1374.500,355.7 1368.900,353.1Z"/><circle cx="1376" cy="430.400" r="2.700"/><circle cx="1370.400" cy="438.600" r="2.700"/><circle cx="1378.600" cy="438.600" r="2.700"/><path d="M1376,430.400L1370.400,438.600M1376,430.400L1378.600,438.600M1370.400,438.600L1368.300,433M1378.600,438.600L1380.800,433.600" fill="none" stroke="#AFB1B3" stroke-width="1.100"/><path fill-rule="evenodd" d="M1374.500,874L1379.900,875.300V880.500C1379.900,883.500 1377,885.200 1374.500,886.200C1372,885.200 1369.100,883.500 1369.100,880.500V875.300ZM1375.400,875.500L1378.700,876.300V880.500C1378.700,882.500 1377,883.900 1375.400,884.600Z"/></g></svg>
<div class="hl" style="left:0;top:949px;width:1386px;background:#323232"></div>
<div class="abs" style="left:0;top:950px;width:1386px;height:43px;background:#3c3f41"></div>
<div class="hl" style="left:0;top:971px;width:1386px;background:#505355"></div>
<svg class="i" style="left:30.85px;top:953.20px" width="13.15" height="16.80" viewBox="-4 -4 13.15 16.80"><g fill="none" stroke="#AFB1B3" stroke-width="1.6"><path d="M0,0V8.8"/><path d="M5.15,1.9C5.15,4.80 3.60,4.84 .4,5.90"/></g><g fill="#AFB1B3"><circle cx="0" cy="0" r="1.85"/><circle cx="0" cy="8.8" r="1.85"/><circle cx="5.15" cy="1.9" r="1.85"/></g></svg><span id="b_git" class="t s11" style="left:48.66px;top:951.5px;height:20px;line-height:20px;letter-spacing:-0.04px;">Git</span><svg class="i" style="left:83.8px;top:956px" width="11" height="11" viewBox="0 0 11 11"><g fill="#AFB1B3"><rect x="0" y="1.200" width="2" height="1.800"/><rect x="3.300" y="1.200" width="6.700" height="1.800"/><rect x="0" y="4.400" width="2" height="1.800"/><rect x="3.300" y="4.400" width="6.700" height="1.800"/><rect x="0" y="7.600" width="2" height="1.800"/><rect x="3.300" y="7.600" width="6.700" height="1.800"/></g></svg><span id="b_todo" class="t s11" style="left:98.92px;top:951.5px;height:20px;line-height:20px;letter-spacing:-0.287px;">TODO</span><svg class="i" style="left:151.2px;top:955.3px" width="11" height="11" viewBox="0 0 11 11"><circle cx="5.500" cy="5.500" r="5.100" fill="#AFB1B3"/><rect x="4.600" y="2.300" width="1.900" height="4.100" fill="#3c3f41"/><rect x="4.600" y="7.300" width="1.900" height="1.700" fill="#3c3f41"/></svg><span id="b_prob" class="t s11" style="left:167.16px;top:951.5px;height:20px;line-height:20px;letter-spacing:0.009px;">Problems</span><svg class="i" style="left:233.7px;top:954.5px" width="14" height="14" viewBox="0 0 14 14"><path d="M5.900,10A4.500,4.500 0 1 1 9.900,4.600" fill="none" stroke="#AFB1B3" stroke-width="1.200"/><path d="M5.600,3.200V6.400L4.400,7.700" fill="none" stroke="#AFB1B3" stroke-width="1.100"/><path d="M7.300,5.200L13.400,8.900L7.300,13.200Z" fill="#AFB1B3"/></svg><span id="b_prof" class="t s11" style="left:251.06px;top:951.5px;height:20px;line-height:20px;letter-spacing:0.274px;">Profiler</span><svg class="i" style="left:310px;top:956px" width="11" height="10" viewBox="0 0 11 10"><path fill="#AFB1B3" fill-rule="evenodd" d="M0,0H11V10H0ZM1.600,2.400L4,4.600L1.600,6.800L2.400,7.600L5.600,4.600L2.400,1.600ZM5.600,6.800H9V7.800H5.600Z"/></svg><span id="b_term" class="t s11" style="left:325.92px;top:951.5px;height:20px;line-height:20px;letter-spacing:0.24px;">Terminal</span><svg class="i" style="left:390px;top:955.6px" width="13" height="12" viewBox="0 0 13 12"><path fill="#AFB1B3" fill-rule="evenodd" d="M3.300,.300H9.700L12.900,6L9.700,11.700H3.300L.100,6ZM4.900,2.900V9.100L9.600,6Z"/></svg><span id="b_serv" class="t s11" style="left:407.16px;top:951.5px;height:20px;line-height:20px;letter-spacing:-0.3px;transform:scaleX(0.9799);">Services</span>
<svg class="i" style="left:13px;top:975.5px" width="13" height="13" viewBox="0 0 13 13"><path d="M2.900,.900H11.600V9.900H2.900Z" fill="none" stroke="#AFB1B3" stroke-width="1"/><path d="M.500,3V11.800H9.900" fill="none" stroke="#AFB1B3" stroke-width="1"/></svg><span id="s_msg0" class="t " style="left:40.04px;top:972px;height:20px;line-height:20px;letter-spacing:0.105px;">Microsoft Defender configuration:</span><span id="s_msg1" class="t " style="left:223.90px;top:972px;height:20px;line-height:20px;letter-spacing:-0.3px;transform:scaleX(0.9793);">The IDE has detected</span><span id="s_msg2" class="t " style="left:335.74px;top:972px;height:20px;line-height:20px;letter-spacing:0.089px;">Microsoft Defender with</span><span id="s_msg3" class="t " style="left:467.04px;top:972px;height:20px;line-height:20px;letter-spacing:-0.109px;">Real-Time Protection enabled.</span><span id="s_msg4" class="t " style="left:629.82px;top:972px;height:20px;line-height:20px;letter-spacing:-0.141px;">It might severely degrade</span><span id="s_msg5" class="t " style="left:765.42px;top:972px;height:20px;line-height:20px;letter-spacing:-0.211px;">IDE performance.</span><span id="s_msg6" class="t " style="left:860.12px;top:972px;height:20px;line-height:20px;letter-spacing:-0.122px;">It is recommended to</span><span id="s_msg7" class="t " style="left:976.16px;top:972px;height:20px;line-height:20px;letter-spacing:-0.12px;">... (2 minutes ago)</span>
<span id="s_idx" class="t " style="left:1091.82px;top:972px;height:20px;line-height:20px;letter-spacing:-0.108px;">Indexing...</span><div class="abs" style="left:1154px;top:980px;width:145px;height:4px;border-radius:2px;background:#a0a0a0"></div>
<div class="abs" style="left:1308px;top:976px;width:3px;height:12px;background:#5e6162"></div><div class="abs" style="left:1313px;top:976px;width:3px;height:12px;background:#5e6162"></div>
<svg class="i" style="left:1330.00px;top:972.70px" width="14.00" height="18.80" viewBox="-4 -4 14.00 18.80"><g fill="none" stroke="#AFB1B3" stroke-width="1.8"><path d="M0,0V10.8"/><path d="M6,1.15C6,4.71 4.20,5.94 .4,7.24"/></g><g fill="#AFB1B3"><circle cx="0" cy="0" r="2"/><circle cx="0" cy="10.8" r="2"/><circle cx="6" cy="1.15" r="2"/></g></svg><span id="s_branch" class="t " style="left:1347.42px;top:972px;height:20px;line-height:20px;letter-spacing:0.312px;">ktlint</span></div>
</div>
</body></html>
